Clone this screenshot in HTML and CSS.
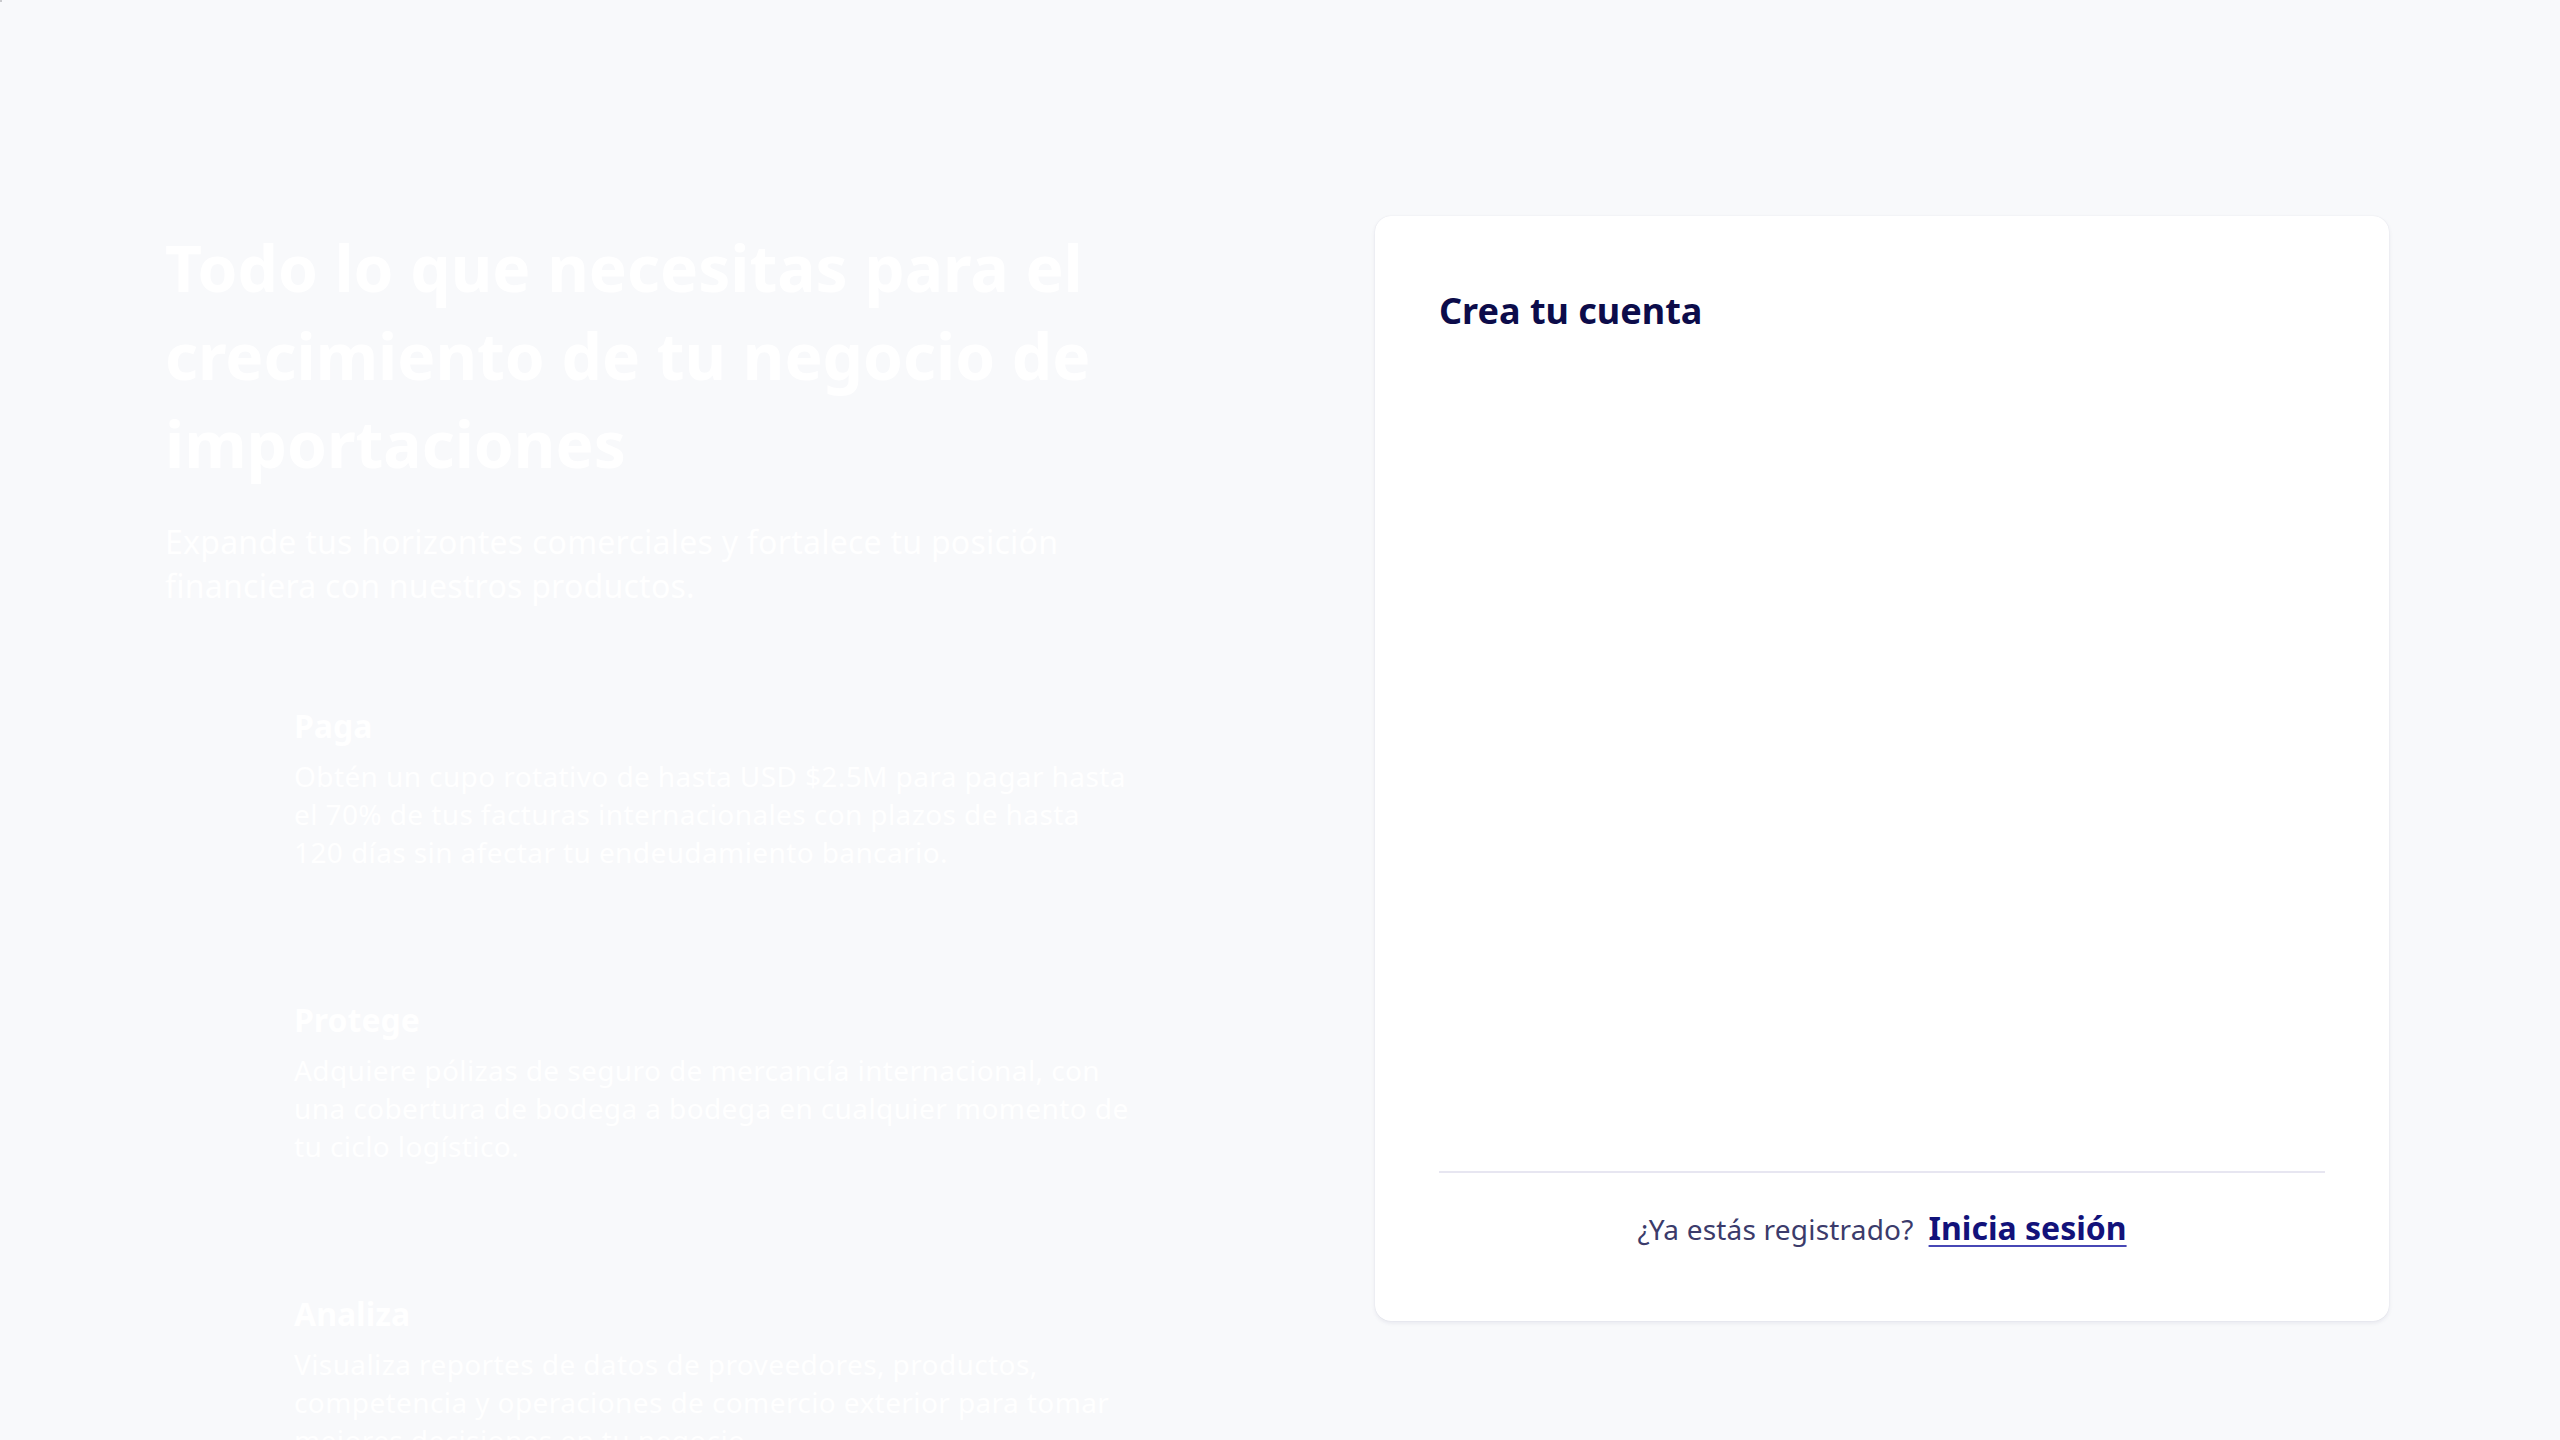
FILE: index.html
```html
<!DOCTYPE html>
<html lang="es">
<head>
<meta charset="utf-8">
<title>Crea tu cuenta</title>
<link rel="stylesheet" href="styles.css">
</head>
<body>
<div class="corner-mark"></div>
<main class="page">
  <section class="intro">
    <h1 class="intro-title">Todo lo que necesitas para el crecimiento de tu negocio de importaciones</h1>
    <p class="intro-sub">Expande tus horizontes comerciales y fortalece tu posición financiera con nuestros productos.</p>
    <ul class="features">
      <li class="feature">
        <div class="feature-icon"></div>
        <div class="feature-body">
          <h3 class="feature-title">Paga</h3>
          <p class="feature-text">Obtén un cupo rotativo de hasta USD $2.5M para pagar hasta el 70% de tus facturas internacionales con plazos de hasta 120 días sin afectar tu endeudamiento bancario.</p>
        </div>
      </li>
      <li class="feature">
        <div class="feature-icon"></div>
        <div class="feature-body">
          <h3 class="feature-title">Protege</h3>
          <p class="feature-text">Adquiere pólizas de seguro de mercancía internacional, con una cobertura de bodega a bodega en cualquier momento de tu ciclo logístico.</p>
        </div>
      </li>
      <li class="feature">
        <div class="feature-icon"></div>
        <div class="feature-body">
          <h3 class="feature-title">Analiza</h3>
          <p class="feature-text">Visualiza reportes de datos de proveedores, productos, competencia y operaciones de comercio exterior para tomar mejores decisiones en tu negocio.</p>
        </div>
      </li>
    </ul>
  </section>
  <section class="card">
    <h2 class="card-title">Crea tu cuenta</h2>
    <div class="card-form"></div>
    <div class="card-footer">
      <span class="footer-text">¿Ya estás registrado?</span>
      <a class="footer-link" href="#">Inicia sesión</a>
    </div>
  </section>
</main>
</body>
</html>
```

FILE: styles.css
```css
* { box-sizing: border-box; }

html, body {
  margin: 0;
  padding: 0;
}

body {
  background: #f8f9fb;
  font-family: "Noto Sans", "Open Sans", sans-serif;
  height: 1440px;
  overflow: hidden;
}

.corner-mark {
  position: absolute;
  left: 0;
  top: 0;
  width: 2px;
  height: 2px;
  background: #c9cacd;
}

.page {
  display: flex;
  align-items: flex-start;
  gap: 245px;
  padding: 216px 171px 0 165px;
}

.intro {
  width: 965px;
  flex: none;
  color: #ffffff;
}

.intro-title {
  margin: 8px 0 0;
  font-size: 64px;
  line-height: 88px;
  font-weight: 700;
}

.intro-sub {
  margin: 32px 0 0;
  font-size: 32px;
  line-height: 44px;
  font-weight: 400;
  letter-spacing: 0.25px;
}

.features {
  list-style: none;
  margin: 96px 0 0;
  padding: 0;
  display: flex;
  flex-direction: column;
  gap: 127px;
}

.feature {
  display: flex;
  gap: 33px;
}

.feature-icon {
  width: 96px;
  height: 96px;
  flex: none;
}

.feature-title {
  margin: 0;
  font-size: 32px;
  line-height: 44px;
  font-weight: 700;
}

.feature-text {
  margin: 9px 0 0;
  font-size: 28px;
  line-height: 38px;
  font-weight: 400;
  letter-spacing: 0.4px;
}

.card {
  width: 1014px;
  height: 1105px;
  flex: none;
  background: #ffffff;
  border-radius: 16px;
  box-shadow: 0 2px 4px rgba(30, 30, 90, 0.08), 0 0 1px rgba(30, 30, 90, 0.12);
  padding: 70px 64px 0;
  display: flex;
  flex-direction: column;
}

.card-title {
  margin: 0;
  font-size: 36px;
  line-height: 49px;
  font-weight: 700;
  color: #0c0c4a;
}

.card-form {
  flex: none;
  height: 838px;
  border-bottom: 2px solid #e7e6f1;
}

.card-footer {
  display: flex;
  justify-content: center;
  align-items: baseline;
  gap: 15px;
  padding-top: 33px;
}

.footer-text {
  font-size: 28px;
  line-height: 44px;
  color: #3b3b6b;
  letter-spacing: 0.2px;
}

.footer-link {
  font-size: 32px;
  line-height: 44px;
  font-weight: 700;
  color: #12127a;
  text-decoration: underline;
  text-decoration-color: #4747b5;
  text-decoration-thickness: 2px;
  text-underline-offset: 5px;
}
```
